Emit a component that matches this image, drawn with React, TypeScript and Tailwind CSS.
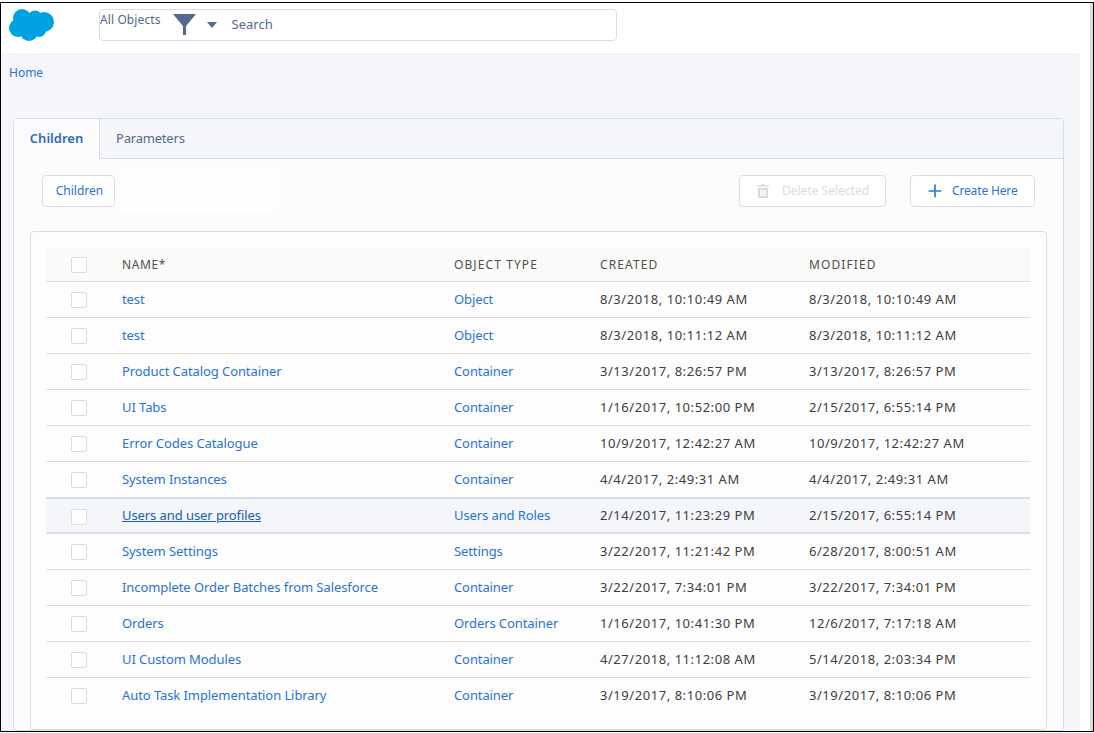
import { Plus } from "lucide-react";

type Row = {
  name: string;
  type: string;
  created: string;
  modified: string;
  hover?: boolean;
};

const rows: Row[] = [
  { name: "test", type: "Object", created: "8/3/2018, 10:10:49 AM", modified: "8/3/2018, 10:10:49 AM" },
  { name: "test", type: "Object", created: "8/3/2018, 10:11:12 AM", modified: "8/3/2018, 10:11:12 AM" },
  { name: "Product Catalog Container", type: "Container", created: "3/13/2017, 8:26:57 PM", modified: "3/13/2017, 8:26:57 PM" },
  { name: "UI Tabs", type: "Container", created: "1/16/2017, 10:52:00 PM", modified: "2/15/2017, 6:55:14 PM" },
  { name: "Error Codes Catalogue", type: "Container", created: "10/9/2017, 12:42:27 AM", modified: "10/9/2017, 12:42:27 AM" },
  { name: "System Instances", type: "Container", created: "4/4/2017, 2:49:31 AM", modified: "4/4/2017, 2:49:31 AM" },
  { name: "Users and user profiles", type: "Users and Roles", created: "2/14/2017, 11:23:29 PM", modified: "2/15/2017, 6:55:14 PM", hover: true },
  { name: "System Settings", type: "Settings", created: "3/22/2017, 11:21:42 PM", modified: "6/28/2017, 8:00:51 AM" },
  { name: "Incomplete Order Batches from Salesforce", type: "Container", created: "3/22/2017, 7:34:01 PM", modified: "3/22/2017, 7:34:01 PM" },
  { name: "Orders", type: "Orders Container", created: "1/16/2017, 10:41:30 PM", modified: "12/6/2017, 7:17:18 AM" },
  { name: "UI Custom Modules", type: "Container", created: "4/27/2018, 11:12:08 AM", modified: "5/14/2018, 2:03:34 PM" },
  { name: "Auto Task Implementation Library", type: "Container", created: "3/19/2017, 8:10:06 PM", modified: "3/19/2017, 8:10:06 PM" },
];

function Checkbox() {
  return <div className="h-4 w-4 rounded-[2px] border border-[#d8dde6] bg-white" />;
}

function CloudLogo() {
  return (
    <svg viewBox="0 0 45 32" className="h-[32px] w-[45px]" fill="#00a1e0">
      <circle cx="13" cy="9" r="9" />
      <circle cx="26" cy="9" r="7.5" />
      <circle cx="35" cy="13" r="10" />
      <circle cx="9" cy="19" r="9" />
      <circle cx="20" cy="23" r="9" />
      <circle cx="30" cy="21" r="7" />
    </svg>
  );
}

function TrashIcon() {
  return (
    <svg viewBox="0 0 12 14" className="h-[14px] w-[12px]" fill="#dddbda">
      <path d="M4.5 0h3v1.2H12v1.6H0V1.2h4.5z" />
      <path d="M1 4h10v9a1 1 0 0 1-1 1H2a1 1 0 0 1-1-1zm2.2 2v6h1.4V6zm2.1 0v6h1.4V6zm2.1 0v6h1.4V6z" fillRule="evenodd" />
    </svg>
  );
}

export default function App() {
  return (
    <div className="h-[733px] w-[1094px] overflow-hidden bg-white pt-[2px] font-['Noto_Sans','Open_Sans',sans-serif]">
      <div className="flex h-[730px] flex-col border border-black">
        <div className="flex h-full flex-col overflow-hidden border-r-[3px] border-[#dcdcdc] pr-[10px]">
          {/* Header */}
          <header className="flex h-[50px] shrink-0 bg-white pt-[6px]">
            <div className="ml-[8px] w-[90px]">
              <CloudLogo />
            </div>
            <div className="flex h-[32px] w-[518px] rounded border border-[#d8dde6] bg-white text-[#54698d]">
              <span className="mt-[2px] text-[12px] leading-[16px] tracking-[0.1px]">All Objects</span>
              <svg viewBox="0 0 22 21" className="ml-[12px] mt-[4px] h-[21px] w-[23px]" fill="#54698d" preserveAspectRatio="none">
                <path d="M0 0h22l-9.5 12v9h-3v-9z" />
              </svg>
              <svg viewBox="0 0 10 6" className="ml-[11px] mt-[12px] h-[6px] w-[10px]" fill="#54698d">
                <path d="M0 0h10L5 6z" />
              </svg>
              <span className="ml-[15px] mt-[5px] text-[13px] leading-[18px]">Search</span>
            </div>
          </header>

          {/* Main */}
          <main className="min-h-0 flex-1 bg-[#f4f6f9] pl-[12px] pr-[16px]">
            <div className="-ml-[4px] h-[65px] pt-[11px] text-[12px] leading-[18px] text-[#2a73d2]">Home</div>
            <div className="rounded border border-[#d8dde6] bg-[#fcfcfd]">
              <div className="flex h-[40px] border-b border-[#d8dde6] bg-[#f4f6f9] text-[13px]">
                <div className="-mb-px flex h-[40px] w-[86px] items-center justify-center rounded-tl border-r border-[#d8dde6] bg-[#fcfcfd] font-semibold text-[#2f69c0]">
                  Children
                </div>
                <div className="flex items-center pl-[16px] tracking-[-0.2px] text-[#54698d]">Parameters</div>
              </div>

              <div className="flex h-[72px] items-start pl-[28px] pr-[28px] pt-[16px] text-[12px]">
                <button className="h-[32px] w-[73px] rounded border border-[#d8dde6] bg-white pl-[2px] text-[#2a73d2]">Children</button>
                <div className="-mt-[7px] ml-[5px] h-[44px] w-[158px] bg-[#fefefe]" />
                <button className="ml-auto flex h-[32px] w-[147px] items-center rounded border border-[#d8dde6] bg-white pl-[17px] text-[#dddbda]">
                  <TrashIcon />
                  <span className="ml-[13px]">Delete Selected</span>
                </button>
                <button className="ml-[24px] flex h-[32px] w-[125px] items-center rounded border border-[#d8dde6] bg-white pl-[14px] text-[#2a73d2]">
                  <Plus className="h-5 w-5 text-[#1b7ed6]" strokeWidth={2} />
                  <span className="ml-[7px] tracking-[-0.15px]">Create Here</span>
                </button>
              </div>

              {/* Table card */}
              <div className="mx-[16px] h-[499px] rounded border border-[#d8dde6] bg-[#fdfdfd] pl-[15px] pr-[16px] pt-[16px] text-[13px]">
                <div className="flex h-[34px] items-center border-b border-[#d8dde6] bg-[#fafaf9] text-[12px] tracking-[1.1px] text-[#514f4d]">
                  <div className="w-[76px] pl-[25px]">
                    <Checkbox />
                  </div>
                  <div className="w-[332px] tracking-[0.6px]">NAME*</div>
                  <div className="w-[146px]">OBJECT TYPE</div>
                  <div className="w-[209px]">CREATED</div>
                  <div>MODIFIED</div>
                </div>
                {rows.map((row, i) => (
                  <div
                    key={i}
                    className={
                      row.hover
                        ? "-mt-px flex h-[37px] items-center border-y-2 border-[#d8dde6] bg-[#f4f6f9]"
                        : "flex h-[36px] items-center border-b border-[#dddbda] last:border-transparent"
                    }
                  >
                    <div className={row.hover ? "mt-[3px] w-[76px] pl-[25px]" : "mt-[1px] w-[76px] pl-[25px]"}>
                      <Checkbox />
                    </div>
                    <div className={row.hover ? "w-[332px] tracking-[-0.08px] text-[#1a5fa8] underline" : "w-[332px] tracking-[-0.08px] text-[#2a73d2]"}>{row.name}</div>
                    <div className="w-[146px] tracking-[-0.1px] text-[#2a73d2]">{row.type}</div>
                    <div className="w-[209px] tracking-[0.55px] text-[#3e3e3c]">{row.created}</div>
                    <div className="tracking-[0.55px] text-[#3e3e3c]">{row.modified}</div>
                  </div>
                ))}
              </div>
            </div>
          </main>
        </div>
      </div>
    </div>
  );
}
